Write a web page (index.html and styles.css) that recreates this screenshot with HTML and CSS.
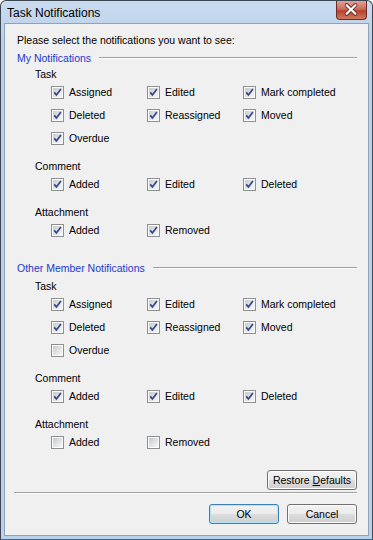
FILE: index.html
```html
<!DOCTYPE html>
<html lang="en">
  <head>
    <title>Task Notifications</title>
    <link rel="stylesheet" href="styles.css">
  </head>
  <body>
    <svg class="defs" width="0" height="0">
      <defs>
        <linearGradient id="boxfill" x1="0" y1="0" x2="1" y2="1">
          <stop offset="0" stop-color="#c8cbcf"/>
          <stop offset="1" stop-color="#f7f7f7"/>
        </linearGradient>
        <symbol id="box" viewBox="0 0 13 13">
          <rect x="0.5" y="0.5" width="12" height="12" fill="#fdfdfd" stroke="#8e8f8f"/>
          <rect x="2" y="2" width="9" height="9" fill="url(#boxfill)"/>
        </symbol>
        <symbol id="chk" viewBox="0 0 13 13">
          <rect x="0.5" y="0.5" width="12" height="12" fill="#fdfdfd" stroke="#8e8f8f"/>
          <rect x="2" y="2" width="9" height="9" fill="url(#boxfill)"/>
          <path d="M3.2 6.4 L5.4 8.9 L9.9 3.1" fill="none" stroke="#30468c" stroke-width="1.7"/>
        </symbol>
      </defs>
    </svg>

    <div class="window">
      <div class="titlebar">
        <span class="title">Task Notifications</span>
        <span class="close">
          <svg width="31" height="19" viewBox="0 0 31 19">
            <path d="M11 5 L20 14 M20 5 L11 14" stroke="#6b2a22" stroke-width="4" stroke-linecap="round"/>
            <path d="M11 5 L20 14 M20 5 L11 14" stroke="#ffffff" stroke-width="2.2" stroke-linecap="round"/>
          </svg>
        </span>
      </div>

      <div class="client">
        <p class="intro">Please select the notifications you want to see:</p>

        <div class="section">
          <div class="heading"><span>My Notifications</span><span class="rule"></span></div>
          <div class="group">
            <div class="group-label">Task</div>
            <div class="grid">
              <label class="check"><svg class="box"><use href="#chk"/></svg>Assigned</label>
              <label class="check"><svg class="box"><use href="#chk"/></svg>Edited</label>
              <label class="check"><svg class="box"><use href="#chk"/></svg>Mark completed</label>
              <label class="check"><svg class="box"><use href="#chk"/></svg>Deleted</label>
              <label class="check"><svg class="box"><use href="#chk"/></svg>Reassigned</label>
              <label class="check"><svg class="box"><use href="#chk"/></svg>Moved</label>
              <label class="check"><svg class="box"><use href="#chk"/></svg>Overdue</label>
            </div>
          </div>
          <div class="group">
            <div class="group-label">Comment</div>
            <div class="grid">
              <label class="check"><svg class="box"><use href="#chk"/></svg>Added</label>
              <label class="check"><svg class="box"><use href="#chk"/></svg>Edited</label>
              <label class="check"><svg class="box"><use href="#chk"/></svg>Deleted</label>
            </div>
          </div>
          <div class="group">
            <div class="group-label">Attachment</div>
            <div class="grid">
              <label class="check"><svg class="box"><use href="#chk"/></svg>Added</label>
              <label class="check"><svg class="box"><use href="#chk"/></svg>Removed</label>
            </div>
          </div>
        </div>

        <div class="section">
          <div class="heading"><span>Other Member Notifications</span><span class="rule"></span></div>
          <div class="group">
            <div class="group-label">Task</div>
            <div class="grid">
              <label class="check"><svg class="box"><use href="#chk"/></svg>Assigned</label>
              <label class="check"><svg class="box"><use href="#chk"/></svg>Edited</label>
              <label class="check"><svg class="box"><use href="#chk"/></svg>Mark completed</label>
              <label class="check"><svg class="box"><use href="#chk"/></svg>Deleted</label>
              <label class="check"><svg class="box"><use href="#chk"/></svg>Reassigned</label>
              <label class="check"><svg class="box"><use href="#chk"/></svg>Moved</label>
              <label class="check"><svg class="box"><use href="#box"/></svg>Overdue</label>
            </div>
          </div>
          <div class="group">
            <div class="group-label">Comment</div>
            <div class="grid">
              <label class="check"><svg class="box"><use href="#chk"/></svg>Added</label>
              <label class="check"><svg class="box"><use href="#chk"/></svg>Edited</label>
              <label class="check"><svg class="box"><use href="#chk"/></svg>Deleted</label>
            </div>
          </div>
          <div class="group">
            <div class="group-label">Attachment</div>
            <div class="grid">
              <label class="check"><svg class="box"><use href="#box"/></svg>Added</label>
              <label class="check"><svg class="box"><use href="#box"/></svg>Removed</label>
            </div>
          </div>
        </div>

        <div class="footer">
          <div class="restore-row">
            <button class="btn restore">Restore <u>D</u>efaults</button>
          </div>
          <div class="separator"></div>
          <div class="actions">
            <button class="btn default">OK</button>
            <button class="btn">Cancel</button>
          </div>
        </div>
      </div>
    </div>
  </body>
</html>
```

FILE: styles.css
```css
body {
  margin: 0;
  font-family: "Liberation Sans", Arial, sans-serif;
  font-size: 10.5px;
  color: #000;
}
.defs {
  position: absolute;
}
.window {
  width: 373px;
  height: 540px;
  box-sizing: border-box;
  border: 1px solid #3d4754;
  border-bottom-color: #2a6f96;
  border-radius: 6px 6px 0 0;
  background: linear-gradient(#c9dbef, #b9d1ea 40px);
  padding: 0 3px 3px 3px;
  display: flex;
  flex-direction: column;
}
.titlebar {
  height: 22px;
  display: flex;
  align-items: flex-start;
  justify-content: space-between;
  padding-left: 3px;
}
.title {
  font-size: 12px;
  line-height: 22px;
  padding-top: 1px;
}
.close {
  width: 31px;
  height: 19px;
  margin-right: 2px;
  box-sizing: border-box;
  border: 1px solid #6d2a24;
  border-top: none;
  border-radius: 0 0 4px 4px;
  background: linear-gradient(#e0a397, #cc6b5b 45%, #b8402c 55%, #cf7a5c);
  display: flex;
}
.close svg {
  margin: -1px 0 0 -1px;
}
.client {
  flex: 1;
  background: #f0f0f0;
  border: 1px solid #8fa3b8;
  padding: 8px 11px 11px 12px;
  display: flex;
  flex-direction: column;
}
.intro {
  margin: 0;
  line-height: 16px;
}
.heading {
  display: flex;
  align-items: center;
  color: #1c39c9;
  line-height: 16px;
  margin-top: 2px;
}
.rule {
  flex: 1;
  height: 1px;
  background: #a0a0a0;
  border-bottom: 1px solid #ffffff;
  margin-left: 8px;
}
.section + .section {
  margin-top: 18px;
}
.section + .section .heading {
  margin-bottom: 2px;
}
.group {
  padding-left: 18px;
}
.group + .group {
  margin-top: 10px;
}
.group-label {
  line-height: 16px;
}
.grid {
  display: grid;
  grid-template-columns: 96px 96px auto;
  grid-auto-rows: 20px;
  row-gap: 3px;
  padding-left: 16px;
}
.check {
  display: flex;
  align-items: center;
  gap: 5px;
}
.box {
  width: 13px;
  height: 13px;
  flex: none;
}
.footer {
  margin-top: auto;
}
.restore-row,
.actions {
  display: flex;
  justify-content: flex-end;
}
.actions {
  gap: 8px;
  margin-top: 10px;
}
.separator {
  height: 1px;
  background: #a0a0a0;
  border-bottom: 1px solid #ffffff;
  margin: 2px 0 0 -3px;
}
.btn {
  font-family: "Liberation Sans", Arial, sans-serif;
  font-size: 10.5px;
  color: #000;
  width: 70px;
  height: 20px;
  padding: 0;
  border: 1px solid #707070;
  border-radius: 3px;
  background: linear-gradient(#f2f2f2, #ebebeb 50%, #dddddd 50%, #cfcfcf);
  box-shadow: inset 0 0 0 1px #fcfcfc;
}
.restore {
  width: 90px;
}
.default {
  border-color: #3c7fb1;
  box-shadow: inset 0 0 0 1px #aee5fb;
}
```
